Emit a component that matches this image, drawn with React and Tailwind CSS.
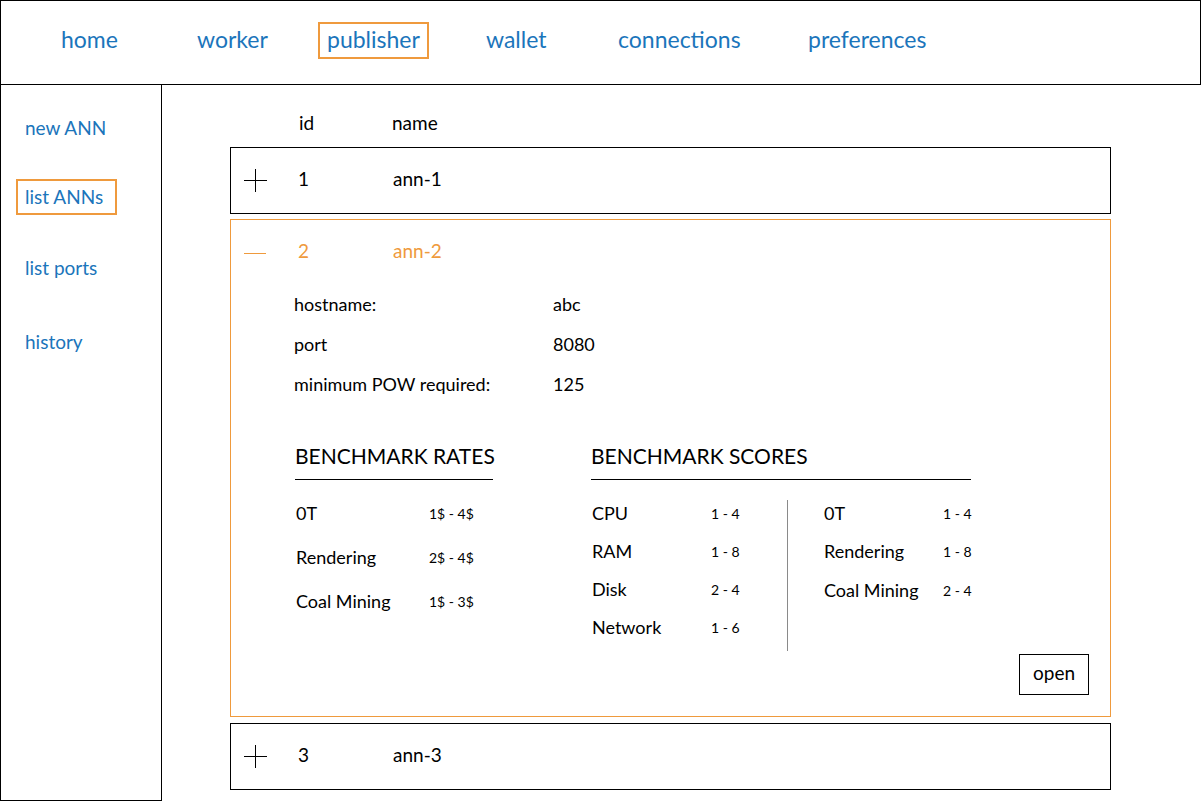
import React from 'react';

const BLUE = 'text-[#1b75bb]';

const navItems = [
  { label: 'home', slot: 'w-[136px]' },
  { label: 'worker', slot: 'w-[130px]' },
  { label: 'publisher', slot: 'w-[159px]', active: true },
  { label: 'wallet', slot: 'w-[132px]' },
  { label: 'connections', slot: 'w-[190px]' },
  { label: 'preferences', slot: 'w-[200px]' },
];

const sideItems = [
  { label: 'new ANN', mt: 'mt-[25px]' },
  { label: 'list ANNs', mt: 'mt-[33px]', active: true },
  { label: 'list ports', mt: 'mt-[35px]' },
  { label: 'history', mt: 'mt-[38px]' },
];

const rates = [
  ['0T', '1$ - 4$'],
  ['Rendering', '2$ - 4$'],
  ['Coal Mining', '1$ - 3$'],
];

const scoresHw = [
  ['CPU', '1 - 4'],
  ['RAM', '1 - 8'],
  ['Disk', '2 - 4'],
  ['Network', '1 - 6'],
];

const scoresTasks = [
  ['0T', '1 - 4'],
  ['Rendering', '1 - 8'],
  ['Coal Mining', '2 - 4'],
];

const Plus = () => (
  <svg width="23" height="23" viewBox="0 0 23 23" className="block">
    <line x1="0" y1="11.5" x2="23" y2="11.5" stroke="#000" strokeWidth="1" />
    <line x1="11.5" y1="0" x2="11.5" y2="23" stroke="#000" strokeWidth="1" />
  </svg>
);

const Minus = () => (
  <svg width="23" height="23" viewBox="0 0 23 23" className="block">
    <line x1="0" y1="11.5" x2="22" y2="11.5" stroke="#ef9a3d" strokeWidth="1" />
  </svg>
);

const CollapsedRow = ({ id, name, className = '' }) => (
  <div className={`h-[67px] border border-black flex items-center pl-[13px] text-[19px] text-black ${className}`}>
    <span className="w-[54px]"><Plus /></span>
    <span className="w-[95px] pb-[3px]">{id}</span>
    <span className="pb-[3px]">{name}</span>
  </div>
);

const App = () => {
  return (
    <div className="w-[1201px] h-[801px] bg-white font-['Lato',sans-serif] overflow-hidden whitespace-nowrap">
      {/* top nav */}
      <div className="h-[85px] border border-black flex pl-[51px] pt-[21px]">
        {navItems.map((item) => (
          <div key={item.label} className={`${item.slot} shrink-0`}>
            <span
              className={`inline-flex items-center h-[37px] px-[7px] pb-[3px] border-2 text-[23px] leading-none ${BLUE} ${
                item.active ? 'border-[#ef9a3d]' : 'border-transparent'
              }`}
            >
              {item.label}
            </span>
          </div>
        ))}
      </div>

      <div className="flex">
        {/* sidebar */}
        <div className="w-[162px] shrink-0 h-[716px] border-l border-r border-b border-black flex flex-col items-start pl-[15px]">
          {sideItems.map((item) => (
            <span
              key={item.label}
              className={`${item.mt} inline-flex items-center h-[36px] pl-[7px] pr-[12px] pb-[2px] border-2 text-[19px] leading-none ${BLUE} ${
                item.active ? 'border-[#ef9a3d]' : 'border-transparent'
              }`}
            >
              {item.label}
            </span>
          ))}
        </div>

        {/* main list */}
        <div className="ml-[68px] w-[881px] shrink-0">
          <div className="h-[62px] pt-[28px] flex text-[19px] leading-[20px] text-black">
            <span className="ml-[69px] w-[93px]">id</span>
            <span>name</span>
          </div>

          <CollapsedRow id="1" name="ann-1" />

          {/* expanded row */}
          <div className="mt-[5px] h-[498px] border border-[#ef9a3d] flex flex-col">
            <div className="h-[66px] flex items-center pl-[13px] text-[19px] text-[#ef9a3d]">
              <span className="w-[54px]"><Minus /></span>
              <span className="w-[95px] pb-[3px]">2</span>
              <span className="pb-[3px]">ann-2</span>
            </div>

            <div className="pl-[63px] text-[18px] text-black">
              {[
                ['hostname:', 'abc'],
                ['port', '8080'],
                ['minimum POW required:', '125'],
              ].map(([k, v]) => (
                <div key={k} className="h-[40px] pb-[3px] flex items-center">
                  <span className="w-[259px] shrink-0">{k}</span>
                  <span>{v}</span>
                </div>
              ))}
            </div>

            <div className="mt-[38px] pl-[64px] flex text-black">
              {/* rates */}
              <div className="w-[296px] shrink-0">
                <div className="w-[198px] h-[36px] border-b border-black text-[21px] leading-[24px]">
                  BENCHMARK RATES
                </div>
                <div className="mt-[11px]">
                  {rates.map(([k, v]) => (
                    <div key={k} className="h-[44px] flex items-center pl-[1px]">
                      <span className="w-[133px] shrink-0 text-[18px]">{k}</span>
                      <span className="text-[14px]">{v}</span>
                    </div>
                  ))}
                </div>
              </div>

              {/* scores */}
              <div className="w-[380px] shrink-0">
                <div className="h-[36px] border-b border-black text-[21px] leading-[24px]">
                  BENCHMARK SCORES
                </div>
                <div className="mt-[14px] flex h-[157px]">
                  <div className="w-[196px] shrink-0 pl-[1px]">
                    {scoresHw.map(([k, v]) => (
                      <div key={k} className="h-[38px] flex items-center">
                        <span className="w-[119px] shrink-0 text-[18px]">{k}</span>
                        <span className="text-[14px]">{v}</span>
                      </div>
                    ))}
                  </div>
                  <div className="mt-[6px] w-px shrink-0 h-[151px] bg-[#8a8a8a]" />
                  <div className="pl-[36px] w-[183px] shrink-0">
                    {scoresTasks.map(([k, v]) => (
                      <div key={k} className="h-[38.5px] flex items-center">
                        <span className="w-[119px] shrink-0 text-[18px]">{k}</span>
                        <span className="text-[14px]">{v}</span>
                      </div>
                    ))}
                  </div>
                </div>
              </div>
            </div>

            <div className="flex justify-end pr-[21px] mt-[3px]">
              <button className="w-[70px] h-[41px] border border-black text-[19px] pb-[3px] text-black flex items-center justify-center">
                open
              </button>
            </div>
          </div>

          <CollapsedRow id="3" name="ann-3" className="mt-[6px]" />
        </div>
      </div>
    </div>
  );
};

export default App;
